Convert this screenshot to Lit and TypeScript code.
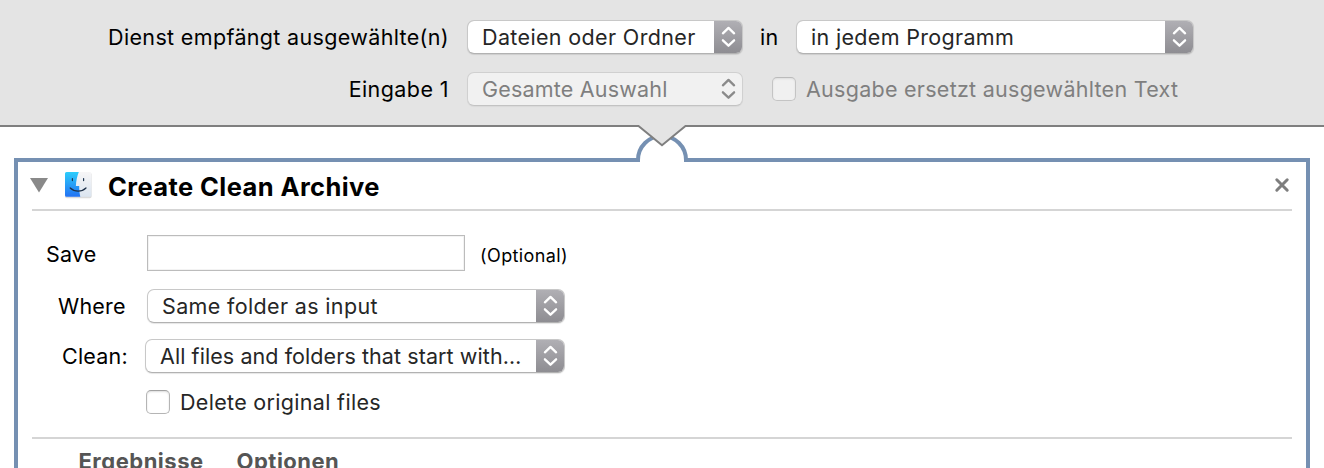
import { LitElement, html, css, svg } from "lit";
import { customElement, property } from "lit/decorators.js";

/** A run of text with its own tracking, in hundredths of a pixel. */
@customElement("ui-text")
export class UiText extends LitElement {
  @property({ type: Number }) track = 40;
  static styles = css`
    :host { display: block; white-space: nowrap; }
  `;
  render() {
    return html`<span style="letter-spacing:${this.track / 100}px"><slot></slot></span>`;
  }
}

/** Pop-up button with the double arrow at its right end. */
@customElement("ui-popup")
export class UiPopup extends LitElement {
  @property({ type: Boolean, reflect: true }) disabled = false;
  static styles = css`
    :host { display: block; height: 34px; }
    .box {
      box-sizing: border-box; height: 34px; display: flex; border-radius: 7px; overflow: hidden;
      background: #fff; color: #262626; border: 1px solid #c8c8c8; border-bottom-color: #b2b2b2;
      box-shadow: 0 1px 1px rgba(0, 0, 0, 0.1);
      background-clip: padding-box;
    }
    .label { flex: 1; min-width: 0; padding-left: 14px; line-height: 32px; }
    .cap {
      width: 29px; margin: -1px -1px -1px 0; display: flex; align-items: center; justify-content: center;
      background: linear-gradient(#b1b0b5, #8d8c91); box-shadow: inset 0 -1px 0 #808084;
    }
    svg { display: block; }
    path { fill: none; stroke: #fff; stroke-width: 2.3; stroke-linecap: round; stroke-linejoin: round; }
    :host([disabled]) .box { background: #f1f1f1; color: #7f7f7f; border-color: #d0d0d0; border-bottom-color: #c3c3c3; box-shadow: 0 1px 1px rgba(0, 0, 0, 0.05); }
    :host([disabled]) .cap { background: none; box-shadow: none; }
    :host([disabled]) path { stroke: #8a8a8a; }
  `;
  render() {
    return html`<div class="box">
      <div class="label"><slot></slot></div>
      <div class="cap">
        <svg width="16" height="22" viewBox="0 0 16 22"><path d="M1.900 7.300 7.500 1.900l5.600 5.400M1.900 14.300 7.500 19.700l5.600-5.400" /></svg>
      </div>
    </div>`;
  }
}

@customElement("ui-check")
export class UiCheck extends LitElement {
  @property({ type: Boolean, reflect: true }) disabled = false;
  static styles = css`
    :host { display: flex; align-items: center; gap: 10px; color: #262626; }
    .box {
      box-sizing: border-box; width: 24px; height: 24px; border-radius: 5px; background: #fff;
      border: 1px solid #b5b5b5; border-top-color: #a2a2a2; box-shadow: inset 0 1px 2px rgba(0, 0, 0, 0.14);
    }
    :host([disabled]) { color: #7f7f7f; }
    :host([disabled]) .box { background: #f0f0f0; border-color: #c4c4c4; border-top-color: #bbb; box-shadow: inset 0 1px 2px rgba(0, 0, 0, 0.08); }
  `;
  render() {
    return html`<div class="box"></div><slot></slot>`;
  }
}

const finder = svg`
  <defs>
    <linearGradient id="b" x1="0" y1="0" x2="0" y2="1"><stop offset="0" stop-color="#2ccdfb"/><stop offset="1" stop-color="#2372f3"/></linearGradient>
    <linearGradient id="w" x1="0" y1="0" x2="0" y2="1"><stop offset="0" stop-color="#f7f6f7"/><stop offset="1" stop-color="#dbe5f0"/></linearGradient>
  </defs>
  <rect x="1" y="1.8" width="26.600" height="25.400" rx="1.8" fill="#000" opacity=".14"/>
  <rect x="1" y="1" width="26.400" height="24.800" rx="1.6" fill="url(#w)"/>
  <path d="M2.600 1H14.800C13.100 5.400 12.100 9.700 11.900 15H15.200C15.100 18.400 15.500 22.200 16.300 25.800H2.600A1.600 1.600 0 0 1 1 24.200V2.600A1.600 1.600 0 0 1 2.600 1Z" fill="url(#b)"/>
  <path d="M8.400 7.600v2M19.600 7.600v2" stroke="#1d3550" stroke-width="1.200" stroke-linecap="round"/>
  <path d="M6.200 17C10.700 21.200 17.700 21.200 22 17" fill="none" stroke="#1d3048" stroke-width="1.200" stroke-linecap="round"/>`;

@customElement("app-root")
export class AppRoot extends LitElement {
  static styles = css`
    :host {
      display: flex; flex-direction: column; position: relative; height: 468px; overflow: hidden;
      background: #fff; color: #000; font: 21.5px/32px Inter, "Liberation Sans", sans-serif;
    }
    header {
      box-sizing: border-box; height: 127px; flex: none; padding-top: 20px; background: #e4e4e4;
      border-bottom: 2px solid #7f7f7f; display: flex; flex-direction: column; gap: 18px;
    }
    .bar { display: flex; align-items: center; height: 34px; }
    .lead { width: 449px; display: flex; justify-content: flex-end; margin-right: 18px; }
    .kind { width: 276px; }
    .in { width: 36px; padding-left: 17px; }
    .app { width: 398px; }
    .replace { margin-left: 29px; }
    .notch { position: absolute; left: 630px; top: 120px; display: block; }
    main {
      box-sizing: border-box; margin: 31px 14px 0; height: 330px; flex: none;
      border: 4px solid #7590b2; padding: 0 14px;
    }
    .title { display: flex; align-items: center; height: 47px; border-bottom: 2px solid #d5d5d5; }
    .tri { margin-left: -2px; margin-top: -1px; }
    .finder { margin-left: 16px; margin-top: -1px; }
    h1 { margin: 3px 0 0 16px; font-size: 25.5px; font-weight: 700; flex: 1; }
    .close { margin-right: 2px; margin-top: -1px; }
    .form { height: 228px; box-sizing: border-box; padding-top: 24px; border-bottom: 2px solid #d5d5d5; }
    .field { display: flex; align-items: center; }
    .save { height: 36px; }
    .where { height: 34px; margin-top: 18px; }
    .clean { height: 34px; margin-top: 16px; }
    .delete { margin: 12px 0 0 114px; height: 34px; }
    .save .name { width: 101px; padding: 1px 0 0 14px; }
    .where .name { width: 89px; padding-left: 26px; }
    .clean .name { width: 83px; padding-left: 30px; }
    .input { box-sizing: border-box; width: 318px; height: 36px; border: 1px solid #bcbcbc; box-shadow: inset 0 0 0 1px #f3f3f3; }
    .opt { font-size: 18px; margin: 5px 0 0 15px; }
    .where ui-popup { width: 418px; }
    .clean ui-popup { width: 420px; }
    footer { display: flex; gap: 33px; padding: 6px 0 0 46.5px; font-size: 22px; font-weight: 700; color: #555; }
  `;
  render() {
    return html`
      <header>
        <div class="bar">
          <div class="lead"><ui-text track="34">Dienst empfängt ausgewählte(n)</ui-text></div>
          <ui-popup class="kind"><ui-text track="36">Dateien oder Ordner</ui-text></ui-popup>
          <ui-text class="in">in</ui-text>
          <ui-popup class="app"><ui-text track="32">in jedem Programm</ui-text></ui-popup>
        </div>
        <div class="bar">
          <div class="lead"><ui-text track="42">Eingabe 1</ui-text></div>
          <ui-popup class="kind" disabled><ui-text track="19">Gesamte Auswahl</ui-text></ui-popup>
          <ui-check class="replace" disabled><ui-text track="27">Ausgabe ersetzt ausgewählten Text</ui-text></ui-check>
        </div>
      </header>
      <main>
        <div class="title">
          <svg class="tri" width="18" height="16" viewBox="0 0 18 16"><path d="M0 1h18L9 15.500z" fill="#898989" /></svg>
          <svg class="finder" width="28" height="28" viewBox="0 0 28 28">${finder}</svg>
          <h1><ui-text track="41">Create Clean Archive</ui-text></h1>
          <svg class="close" width="16" height="16" viewBox="0 0 16 16"><path d="M2.800 2.800 13.200 13.200M13.200 2.800 2.800 13.200" stroke="#7e7e7e" stroke-width="3" stroke-linecap="round" /></svg>
        </div>
        <div class="form">
          <div class="field save">
            <ui-text class="name" track="15">Save</ui-text>
            <div class="input"></div>
            <ui-text class="opt">(Optional)</ui-text>
          </div>
          <div class="field where">
            <ui-text class="name" track="20">Where</ui-text>
            <ui-popup><ui-text track="35">Same folder as input</ui-text></ui-popup>
          </div>
          <div class="field clean">
            <ui-text class="name" track="20">Clean:</ui-text>
            <ui-popup><ui-text track="8">All files and folders that start with…</ui-text></ui-popup>
          </div>
          <ui-check class="delete"><ui-text track="31">Delete original files</ui-text></ui-check>
        </div>
        <footer><ui-text track="50">Ergebnisse</ui-text><ui-text track="48">Optionen</ui-text></footer>
      </main>
      <svg class="notch" width="64" height="46" viewBox="0 0 64 46">
        <path d="M10 38h44v4H10z" fill="#fff" />
        <path d="M8 42V40A24.500 24.500 0 0 1 56 40V42z" fill="#fff" />
        <path d="M8 42V40A24 24 0 0 1 56 40V42" fill="none" stroke="#7590b2" stroke-width="4" />
        <path d="M0 0H64V6H55.500L32 25 8.500 6H0z" fill="#e4e4e4" />
        <path d="M0 6H8.500L32 25.200 55.500 6H64" fill="none" stroke="#7f7f7f" stroke-width="2" />
      </svg>
    `;
  }
}
